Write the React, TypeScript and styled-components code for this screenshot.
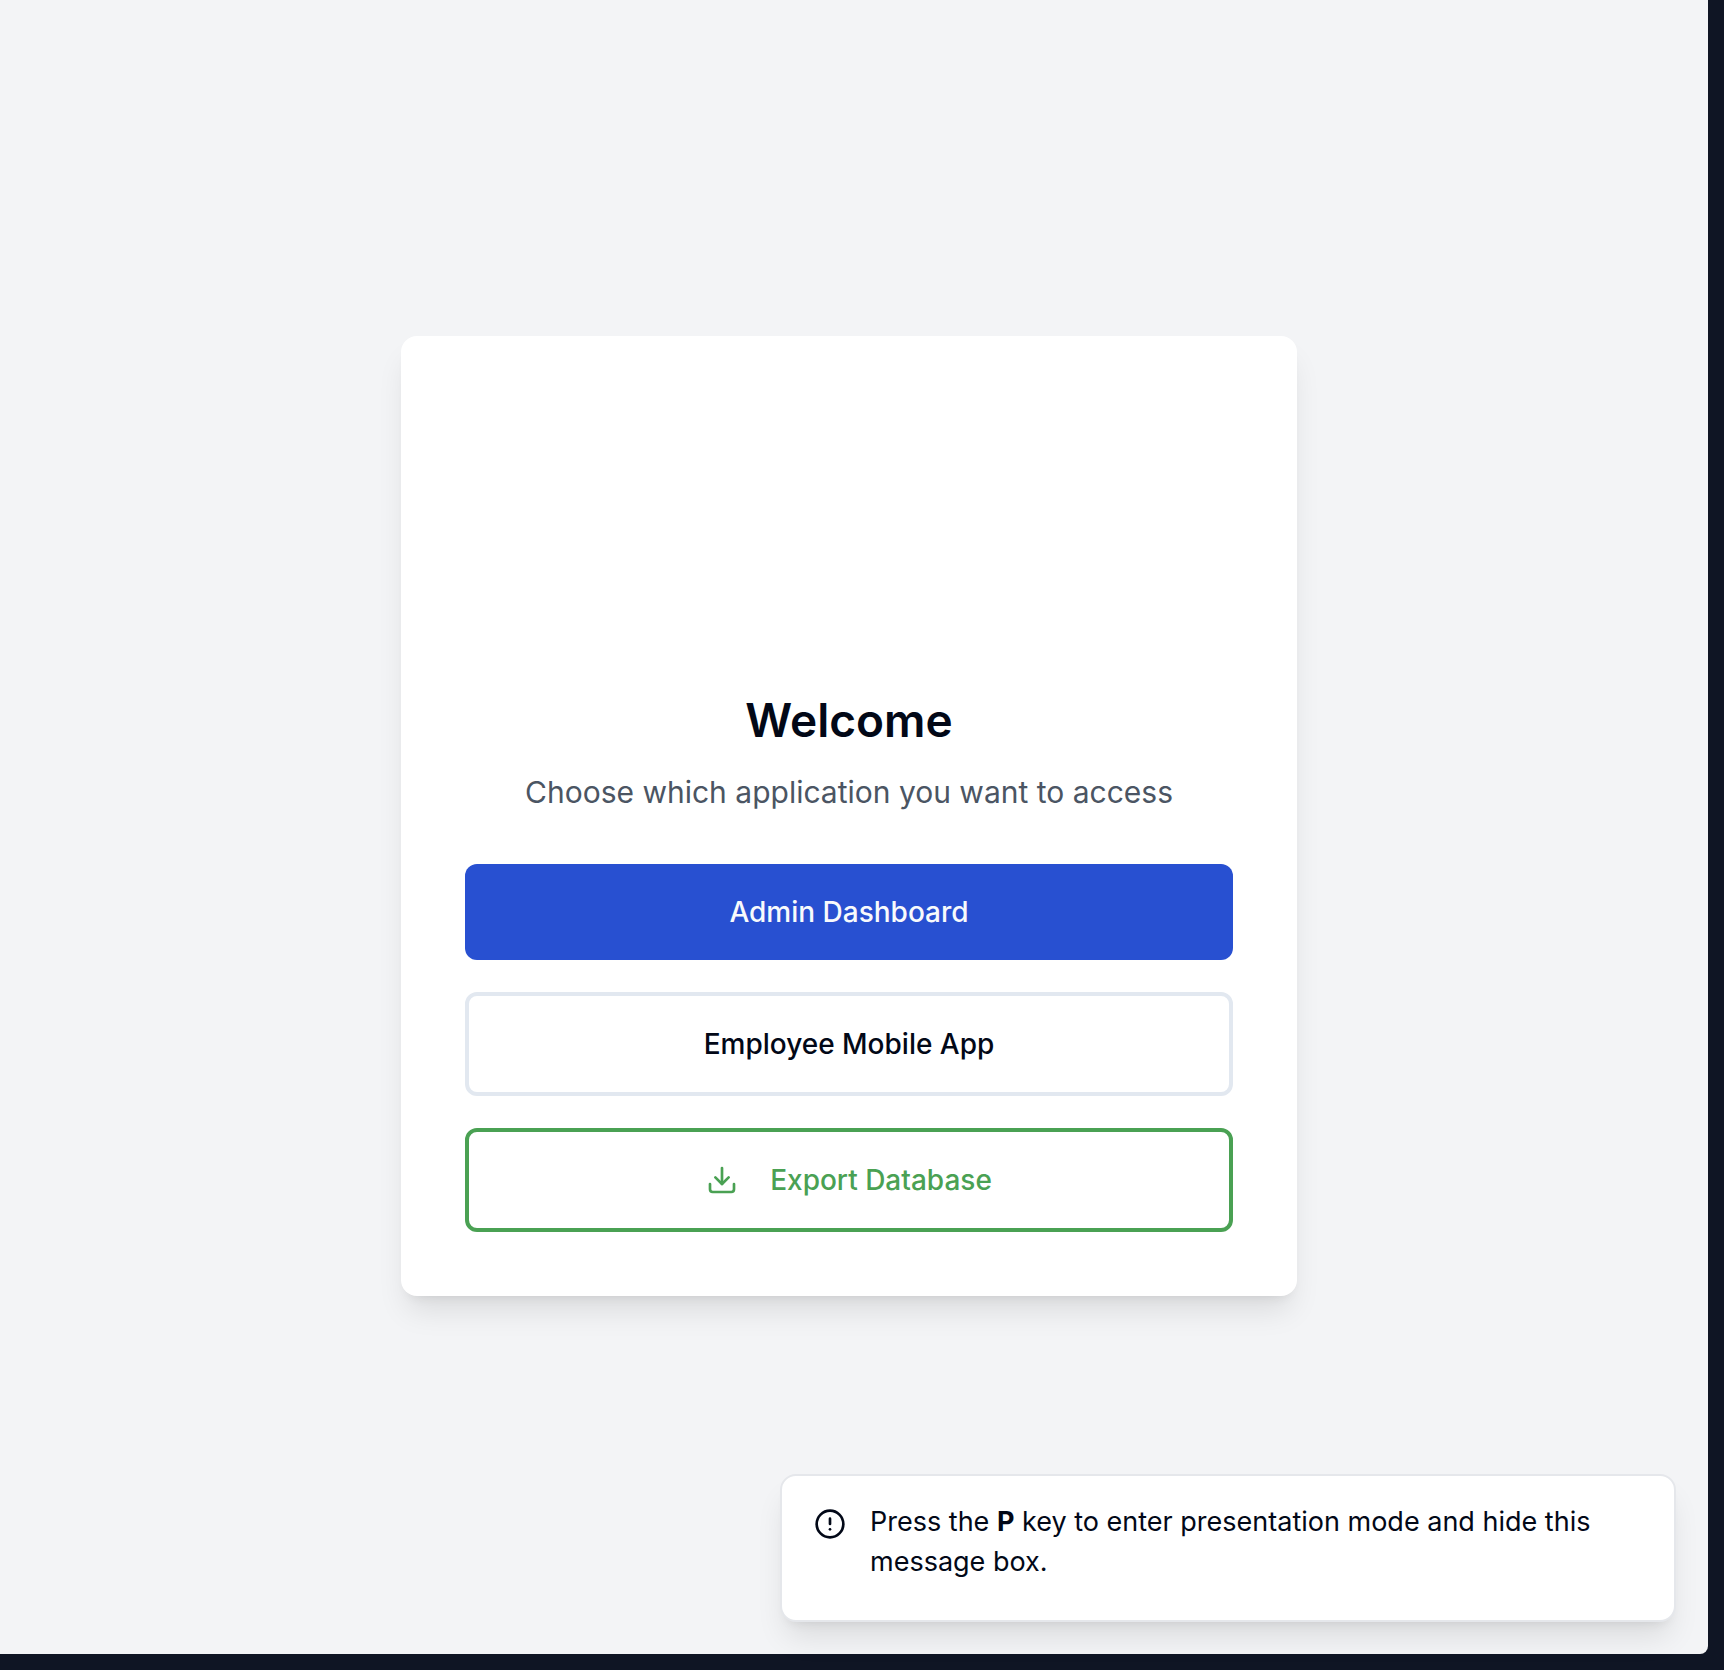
import { CircleAlert, Download } from "lucide-react";
import styled, { createGlobalStyle, css } from "styled-components";

const color = {
  frame: "#0f1524",
  stage: "#f3f4f6",
  surface: "#ffffff",
  ink: "#020817",
  muted: "#4b5563",
  line: "#e2e8f0",
  noticeLine: "#e5e7eb",
  primary: "#2850d1",
  success: "#4aa153",
};

const elevation =
  "0 20px 30px -6px rgba(0, 0, 0, 0.1), 0 8px 12px -8px rgba(0, 0, 0, 0.1)";

const GlobalStyle = createGlobalStyle`
  *, *::before, *::after {
    box-sizing: border-box;
  }

  body {
    margin: 0;
    background: ${color.frame};
    color: ${color.ink};
    font-family: Inter, "Liberation Sans", sans-serif;
    font-size: 28px;
    line-height: 40px;
  }
`;

const Frame = styled.div`
  display: flex;
  min-height: 100vh;
  padding: 0 16px 16px 0;
`;

const Stage = styled.main`
  position: relative;
  flex: 1;
  display: flex;
  align-items: center;
  justify-content: center;
  padding: 0 10px 22px 0;
  background: ${color.stage};
  border-radius: 0 0 8px 0;
`;

const Card = styled.section`
  width: 100%;
  max-width: 896px;
  padding: 64px;
  background: ${color.surface};
  border-radius: 16px;
  box-shadow: ${elevation};
`;

const Header = styled.header`
  display: flex;
  flex-direction: column;
  align-items: center;
  gap: 24px;
  padding-bottom: 48px;
  text-align: center;
`;

const LogoSlot = styled.div`
  height: 272px;
`;

const Title = styled.h1`
  margin: 0;
  font-size: 46px;
  line-height: 48px;
  font-weight: 600;
`;

const Subtitle = styled.p`
  margin: 0;
  color: ${color.muted};
  font-size: 30px;
  line-height: 48px;
`;

const Actions = styled.div`
  display: flex;
  flex-direction: column;
  gap: 32px;
`;

type Variant = "primary" | "outline" | "success";

const variants = {
  primary: css`
    border: 0;
    background: ${color.primary};
    color: #f8fafc;
  `,
  outline: css`
    border: 4px solid ${color.line};
    background: ${color.surface};
    color: ${color.ink};
  `,
  success: css`
    border: 4px solid ${color.success};
    background: ${color.surface};
    color: ${color.success};
  `,
};

const ActionButton = styled.button<{ $variant: Variant }>`
  display: flex;
  align-items: center;
  justify-content: center;
  gap: 32px;
  width: 100%;
  padding: 28px 32px;
  border-radius: 12px;
  font: inherit;
  font-weight: 500;
  cursor: pointer;
  ${({ $variant }) => variants[$variant]}

  svg {
    flex: none;
  }
`;

const Notice = styled.aside`
  position: absolute;
  right: 32px;
  bottom: 32px;
  display: flex;
  align-items: flex-start;
  gap: 24px;
  width: 896px;
  max-width: calc(100% - 64px);
  padding: 26px 32px 38px;
  background: ${color.surface};
  border: 2px solid ${color.noticeLine};
  border-radius: 16px;
  box-shadow: ${elevation};

  svg {
    flex: none;
    margin-top: 6px;
  }
`;

const NoticeText = styled.p`
  margin: 0;
  font-size: 27px;
`;

const Key = styled.strong`
  font-weight: 700;
`;

export default function App() {
  return (
    <>
      <GlobalStyle />
      <Frame>
        <Stage>
          <Card>
            <Header>
              <LogoSlot />
              <Title>Welcome</Title>
              <Subtitle>Choose which application you want to access</Subtitle>
            </Header>
            <Actions>
              <ActionButton type="button" $variant="primary">
                Admin Dashboard
              </ActionButton>
              <ActionButton type="button" $variant="outline">
                Employee Mobile App
              </ActionButton>
              <ActionButton type="button" $variant="success">
                <Download size={32} aria-hidden="true" />
                Export Database
              </ActionButton>
            </Actions>
          </Card>
          <Notice role="status">
            <CircleAlert size={32} aria-hidden="true" />
            <NoticeText>
              Press the <Key>P</Key> key to enter presentation mode and hide
              this message box.
            </NoticeText>
          </Notice>
        </Stage>
      </Frame>
    </>
  );
}
